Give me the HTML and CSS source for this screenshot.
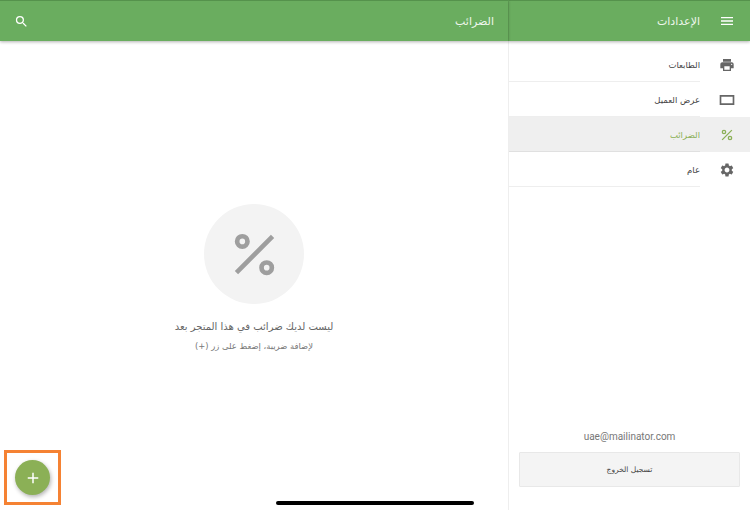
FILE: index.html
```html
<!DOCTYPE html>
<html lang="ar" dir="rtl">

<head>
    <meta charset="UTF-8">
    <title>الإعدادات</title>
    <link rel="stylesheet" href="styles.css">
</head>

<body>
    <div class="app">
        <aside class="sidebar">
            <header class="topbar">
                <div class="rail-cell">
                    <svg class="icon" viewBox="0 0 24 24"><path d="M3 18h18v-2H3v2zm0-5h18v-2H3v2zm0-7v2h18V6H3z"/></svg>
                </div>
                <span class="topbar-title">الإعدادات</span>
            </header>

            <nav class="menu">
                <a class="menu-item">
                    <div class="rail-cell">
                        <svg class="icon" viewBox="0 0 24 24"><path d="M19 8H5c-1.66 0-3 1.34-3 3v6h4v4h12v-4h4v-6c0-1.66-1.34-3-3-3zm-3 11H8v-5h8v5zm3-7c-.55 0-1-.45-1-1s.45-1 1-1 1 .45 1 1-.45 1-1 1zm-1-9H6v4h12V3z"/></svg>
                    </div>
                    <span class="menu-label">الطابعات</span>
                </a>
                <a class="menu-item">
                    <div class="rail-cell">
                        <svg class="icon" viewBox="0 0 24 24"><path d="M1 4.500v15h22v-15H1zm2.500 2.500h17v10h-17V7z" fill-rule="evenodd"/></svg>
                    </div>
                    <span class="menu-label">عرض العميل</span>
                </a>
                <a class="menu-item active">
                    <div class="rail-cell">
                        <svg class="icon" viewBox="0 0 24 24"><path fill-rule="evenodd" d="M7.500 4a3.500 3.500 0 1 0 0 7 3.500 3.500 0 0 0 0-7zm0 2a1.500 1.500 0 1 1 0 3 1.500 1.500 0 0 1 0-3zM16.500 13a3.500 3.500 0 1 0 0 7 3.500 3.500 0 0 0 0-7zm0 2a1.500 1.500 0 1 1 0 3 1.500 1.500 0 0 1 0-3zM18.600 4 20 5.400 5.400 20 4 18.600z"/></svg>
                    </div>
                    <span class="menu-label">الضرائب</span>
                </a>
                <a class="menu-item">
                    <div class="rail-cell">
                        <svg class="icon" viewBox="0 0 24 24"><path d="M19.14 12.94c.04-.3.06-.61.06-.94 0-.32-.02-.64-.07-.94l2.03-1.58a.49.49 0 0 0 .12-.61l-1.92-3.32a.488.488 0 0 0-.59-.22l-2.39.96c-.5-.38-1.03-.7-1.62-.94l-.36-2.54a.484.484 0 0 0-.48-.41h-3.84c-.24 0-.43.17-.47.41l-.36 2.54c-.59.24-1.13.57-1.62.94l-2.39-.96c-.22-.08-.47 0-.59.22L2.74 8.87c-.12.21-.08.47.12.61l2.03 1.58c-.05.3-.09.63-.09.94s.02.64.07.94l-2.03 1.58a.49.49 0 0 0-.12.61l1.92 3.32c.12.22.37.29.59.22l2.39-.96c.5.38 1.03.7 1.62.94l.36 2.54c.05.24.24.41.48.41h3.84c.24 0 .44-.17.47-.41l.36-2.54c.59-.24 1.13-.56 1.62-.94l2.39.96c.22.08.47 0 .59-.22l1.92-3.32c.12-.22.07-.47-.12-.61l-2.01-1.58zM12 15.6c-1.98 0-3.6-1.62-3.6-3.6s1.62-3.6 3.6-3.6 3.6 1.62 3.6 3.6-1.62 3.6-3.6 3.6z"/></svg>
                    </div>
                    <span class="menu-label">عام</span>
                </a>
            </nav>

            <div class="account">
                <div class="account-email">uae@mailinator.com</div>
                <button class="logout">تسجيل الخروج</button>
            </div>
        </aside>

        <main class="content">
            <header class="topbar content-bar">
                <span class="content-title">الضرائب</span>
                <svg class="icon" viewBox="0 0 24 24"><path d="M15.5 14h-.79l-.28-.27A6.47 6.47 0 0 0 16 9.5 6.5 6.5 0 1 0 9.5 16c1.61 0 3.09-.59 4.23-1.57l.27.28v.79l5 4.99L20.49 19l-4.99-5zm-6 0C7.01 14 5 11.99 5 9.5S7.01 5 9.5 5 14 7.01 14 9.5 11.99 14 9.5 14z"/></svg>
            </header>

            <div class="empty">
                <div class="empty-circle">
                    <svg viewBox="0 0 48 48"><path fill-rule="evenodd" d="M11 2a8 8 0 1 0 0 16 8 8 0 0 0 0-16zm0 5a3 3 0 1 1 0 6 3 3 0 0 1 0-6zM37 30a8 8 0 1 0 0 16 8 8 0 0 0 0-16zm0 5a3 3 0 1 1 0 6 3 3 0 0 1 0-6zM41.500 3 45 6.500 6.500 45 3 41.500z"/></svg>
                </div>
                <div class="empty-title">ليست لديك ضرائب في هذا المتجر بعد</div>
                <div class="empty-hint">لإضافة ضريبة، إضغط على زر (+)</div>
            </div>

            <button class="fab">
                <svg viewBox="0 0 24 24"><path d="M19 13h-6v6h-2v-6H5v-2h6V5h2v6h6v2z"/></svg>
            </button>
        </main>
    </div>

    <!-- highlight round the add button, and the device home bar -->
    <div class="highlight"></div>
    <div class="home-bar"></div>
</body>

</html>
```

FILE: styles.css
```css
:root {
    --green: #6aad5f;
    --green-dark: #55924c;
    --accent: #8bb056;
    --icon: #666666;
    --line: #eeeeee;
    --text: #444444;
}

html,
body {
    margin: 0;
    padding: 0;
    height: 100%;
    overflow: hidden;
}

body {
    font-family: 'DejaVu Sans', 'Noto Sans', sans-serif;
    background-color: #fff;
    color: var(--text);
}

.app {
    display: flex;
    height: 510px;
}

.topbar {
    display: flex;
    align-items: center;
    box-sizing: border-box;
    height: 41px;
    flex-shrink: 0;
    background-color: var(--green);
    border-top: 1px solid var(--green-dark);
    box-shadow: 0 1px 3px rgba(0, 0, 0, 0.3);
    color: #fff;
    position: relative;
}

.topbar .icon {
    fill: #fff;
}

.icon {
    width: 16px;
    height: 16px;
    fill: var(--icon);
}

.sidebar {
    width: 241px;
    flex-shrink: 0;
    display: flex;
    flex-direction: column;
    border-left: 1px solid var(--line);
}

.sidebar .topbar {
    margin-left: -1px;
    border-left: 1px solid #64a459;
}

.rail-cell {
    width: 50px;
    padding-left: 4px;
    box-sizing: border-box;
    display: flex;
    align-items: center;
    justify-content: center;
    flex-shrink: 0;
}

.topbar-title {
    font-size: 11px;
    color: #eef6ec;
}

.menu {
    padding-top: 6px;
}

.menu-item {
    display: flex;
    align-items: center;
    height: 35px;
    position: relative;
}

.menu-item::after {
    content: "";
    position: absolute;
    bottom: 0;
    left: 0;
    right: 50px;
    border-bottom: 1px solid var(--line);
}

.menu-label {
    font-size: 8.5px;
    color: var(--text);
}

.menu-item.active {
    background-color: #efefef;
}

.menu-item.active::after {
    border-bottom-color: #e0e0e0;
}

.menu-item.active .menu-label {
    color: var(--accent);
}

.menu-item.active .icon {
    fill: var(--accent);
}

.account {
    margin-top: auto;
    padding: 0 10px 23px;
}

.account-email {
    direction: ltr;
    text-align: center;
    font-family: 'Roboto', sans-serif;
    font-size: 10px;
    color: #777;
    margin-bottom: 10px;
}

.logout {
    display: block;
    width: 100%;
    height: 35px;
    background-color: #f4f4f4;
    border: 1px solid #e8e8e8;
    border-radius: 1px;
    font-family: inherit;
    font-size: 7.5px;
    color: var(--text);
}

.content {
    flex: 1;
    display: flex;
    flex-direction: column;
    position: relative;
}

.content-bar {
    justify-content: space-between;
    padding: 0 14px;
}

.content-title {
    font-size: 11px;
    color: #eef6ec;
}

.content-bar .icon {
    width: 15px;
    height: 15px;
}

.empty {
    display: flex;
    flex-direction: column;
    align-items: center;
    padding-top: 163px;
}

.empty-circle {
    width: 100px;
    height: 100px;
    border-radius: 50%;
    background-color: #f3f3f3;
    display: flex;
    align-items: center;
    justify-content: center;
}

.empty-circle svg {
    width: 45px;
    height: 45px;
    fill: #9e9e9e;
}

.empty-title {
    font-size: 10px;
    color: #666;
    margin-top: 17px;
}

.empty-hint {
    font-size: 8.4px;
    color: #777;
    margin-top: 9px;
}

.fab {
    position: absolute;
    left: 15px;
    bottom: 15px;
    width: 35px;
    height: 35px;
    padding: 0;
    border: none;
    border-radius: 50%;
    background-color: var(--accent);
    box-shadow: 1px 2px 4px rgba(0, 0, 0, 0.3);
    display: flex;
    align-items: center;
    justify-content: center;
}

.fab svg {
    width: 18px;
    height: 18px;
    fill: #fff;
}

.highlight {
    position: absolute;
    left: 4px;
    top: 450px;
    width: 51px;
    height: 49px;
    border: 3px solid #f58233;
}

.home-bar {
    position: absolute;
    left: 276px;
    top: 501px;
    width: 198px;
    height: 4px;
    border-radius: 2px;
    background-color: #000;
}
```
